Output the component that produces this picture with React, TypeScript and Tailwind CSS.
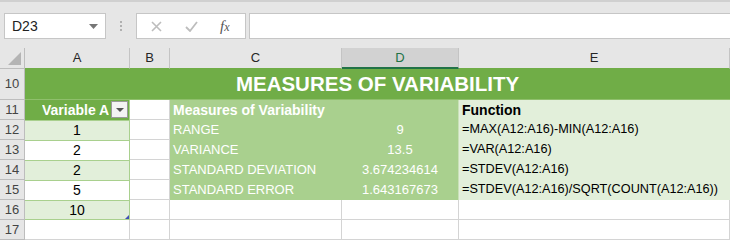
import React from 'react';

const FONT = { fontFamily: '"Liberation Sans", Arial, sans-serif' };

const rows = [
  { n: 12, a: '1', c: 'RANGE', d: '9', e: '=MAX(A12:A16)-MIN(A12:A16)', band: true },
  { n: 13, a: '2', c: 'VARIANCE', d: '13.5', e: '=VAR(A12:A16)', band: false },
  { n: 14, a: '2', c: 'STANDARD DEVIATION', d: '3.674234614', e: '=STDEV(A12:A16)', band: true },
  { n: 15, a: '5', c: 'STANDARD ERROR', d: '1.643167673', e: '=STDEV(A12:A16)/SQRT(COUNT(A12:A16))', band: false },
];

const RowHead = ({ n }: { n: number }) => (
  <div className="bg-[#e6e6e6] border-r border-b border-[#bdbdbd] flex items-center justify-center text-[13px] text-[#444]">
    {n}
  </div>
);

const ColHead = ({ label, active }: { label: string; active?: boolean }) => (
  <div
    className={`flex items-center justify-center text-[13px] border-r border-[#c4c4c4] ${
      active ? 'bg-[#d2d2d2] text-[#217346] border-b-2 border-b-[#217346]' : 'bg-[#e6e6e6] text-[#262626] border-b border-b-[#70ad47]'
    }`}
  >
    {label}
  </div>
);

export default function App() {
  return (
    <div className="w-[730px] h-[242px] overflow-hidden bg-white" style={FONT}>
      {/* Formula bar */}
      <div className="h-[48px] bg-[#e6e6e6] border-t-2 border-[#d0d0d0] relative flex items-start pt-[11px]">
        <div className="ml-[4px] w-[102px] h-[26px] bg-white border border-[#c6c6c6] flex items-center justify-between px-[7px]">
          <span className="text-[14px] text-[#222]">D23</span>
          <svg width="9" height="5" viewBox="0 0 9 5"><path d="M0 0h9L4.5 5z" fill="#767676" /></svg>
        </div>
        <div className="w-[30px] h-[26px] flex flex-col items-center justify-center gap-[2px]">
          <span className="w-[2px] h-[2px] bg-[#b0b0b0]" />
          <span className="w-[2px] h-[2px] bg-[#b0b0b0]" />
          <span className="w-[2px] h-[2px] bg-[#b0b0b0]" />
        </div>
        <div className="w-[110px] h-[26px] bg-white border border-[#c6c6c6] flex items-center">
          <svg className="ml-[14px]" width="11" height="11" viewBox="0 0 11 11">
            <path d="M1 1l9 9M10 1l-9 9" stroke="#bdbdbd" strokeWidth="1.6" />
          </svg>
          <svg className="ml-[23px]" width="13" height="11" viewBox="0 0 13 11">
            <path d="M1 6l4 4 7-9" stroke="#bdbdbd" strokeWidth="1.8" fill="none" />
          </svg>
          <span className="ml-[22px] text-[15px] italic text-[#555]" style={{ fontFamily: '"Liberation Serif", serif' }}>
            f<span className="text-[12px]">x</span>
          </span>
        </div>
        <div className="ml-[3px] flex-1 h-[26px] bg-white border border-[#c6c6c6] border-r-0" />
      </div>

      {/* Grid */}
      <div className="grid grid-cols-[25px_105px_40px_172px_117px_1fr] grid-rows-[21px_31px_20px_20px_20px_20px_20px_20px_20px_22px]">
        {/* column headers */}
        <div className="bg-[#e6e6e6] border-r border-b border-[#bdbdbd] flex items-end justify-end p-[3px]">
          <svg width="13" height="13" viewBox="0 0 13 13"><path d="M13 0v13H0z" fill="#b4b4b4" /></svg>
        </div>
        <ColHead label="A" />
        <ColHead label="B" />
        <ColHead label="C" />
        <ColHead label="D" active />
        <ColHead label="E" />

        {/* row 10 */}
        <RowHead n={10} />
        <div className="col-span-5 bg-[#70ad47] flex items-center justify-center text-white font-bold text-[20.5px] border-b border-[#8fbf6c]">
          MEASURES OF VARIABILITY
        </div>

        {/* row 11 */}
        <RowHead n={11} />
        <div className="bg-[#70ad47] border-r border-[#a9d08e] flex items-center relative">
          <span className="ml-[17px] text-white font-bold text-[14px] whitespace-nowrap overflow-hidden">Variable A</span>
          <div className="absolute right-[1px] top-[1px] w-[17px] h-[17px] bg-[#f3f3f3] border border-[#9a9a9a] flex items-center justify-center">
            <svg width="8" height="4" viewBox="0 0 8 4"><path d="M0 0h8L4 4z" fill="#555" /></svg>
          </div>
        </div>
        <div className="bg-white border-r border-b border-[#d4d4d4]" />
        <div className="bg-[#a9d08e] flex items-center pl-[3px] text-white font-bold text-[14px] whitespace-nowrap">
          Measures of Variability
        </div>
        <div className="bg-[#a9d08e] border-r border-[#c9e0b8]" />
        <div className="bg-[#e2efda] flex items-center pl-[3px] text-black font-bold text-[14px]">Function</div>

        {rows.map((r) => (
          <React.Fragment key={r.n}>
            <RowHead n={r.n} />
            <div
              className={`${r.band ? 'bg-[#e2efda]' : 'bg-white'} border-r border-t border-[#a9d08e] flex items-center justify-center text-[14px] text-black`}
            >
              {r.a}
            </div>
            <div className="bg-white border-r border-b border-[#d4d4d4]" />
            <div className="bg-[#a9d08e] flex items-center pl-[3px] text-white text-[13px] whitespace-nowrap">{r.c}</div>
            <div className="bg-[#a9d08e] border-r border-[#c9e0b8] flex items-center justify-center text-white text-[13px]">
              {r.d}
            </div>
            <div className="bg-[#e2efda] flex items-center pl-[3px] text-black text-[12.7px] whitespace-nowrap">{r.e}</div>
          </React.Fragment>
        ))}

        {/* row 16 */}
        <RowHead n={16} />
        <div className="bg-[#e2efda] border-r border-t border-b border-[#a9d08e] flex items-center justify-center text-[14px] text-black relative">
          10
          <svg className="absolute right-0 bottom-0" width="4" height="4" viewBox="0 0 4 4"><path d="M4 0v4H0z" fill="#3f51b5" /></svg>
        </div>
        <div className="border-r border-b border-[#d4d4d4]" />
        <div className="border-r border-b border-[#d4d4d4]" />
        <div className="border-r border-b border-[#d4d4d4]" />
        <div className="border-r border-b border-[#d4d4d4]" />

        {/* row 17 */}
        <RowHead n={17} />
        <div className="border-r border-b border-[#d4d4d4]" />
        <div className="border-r border-b border-[#d4d4d4]" />
        <div className="border-r border-b border-[#d4d4d4]" />
        <div className="border-r border-b border-[#d4d4d4]" />
        <div className="border-r border-b border-[#d4d4d4]" />
      </div>
    </div>
  );
}
